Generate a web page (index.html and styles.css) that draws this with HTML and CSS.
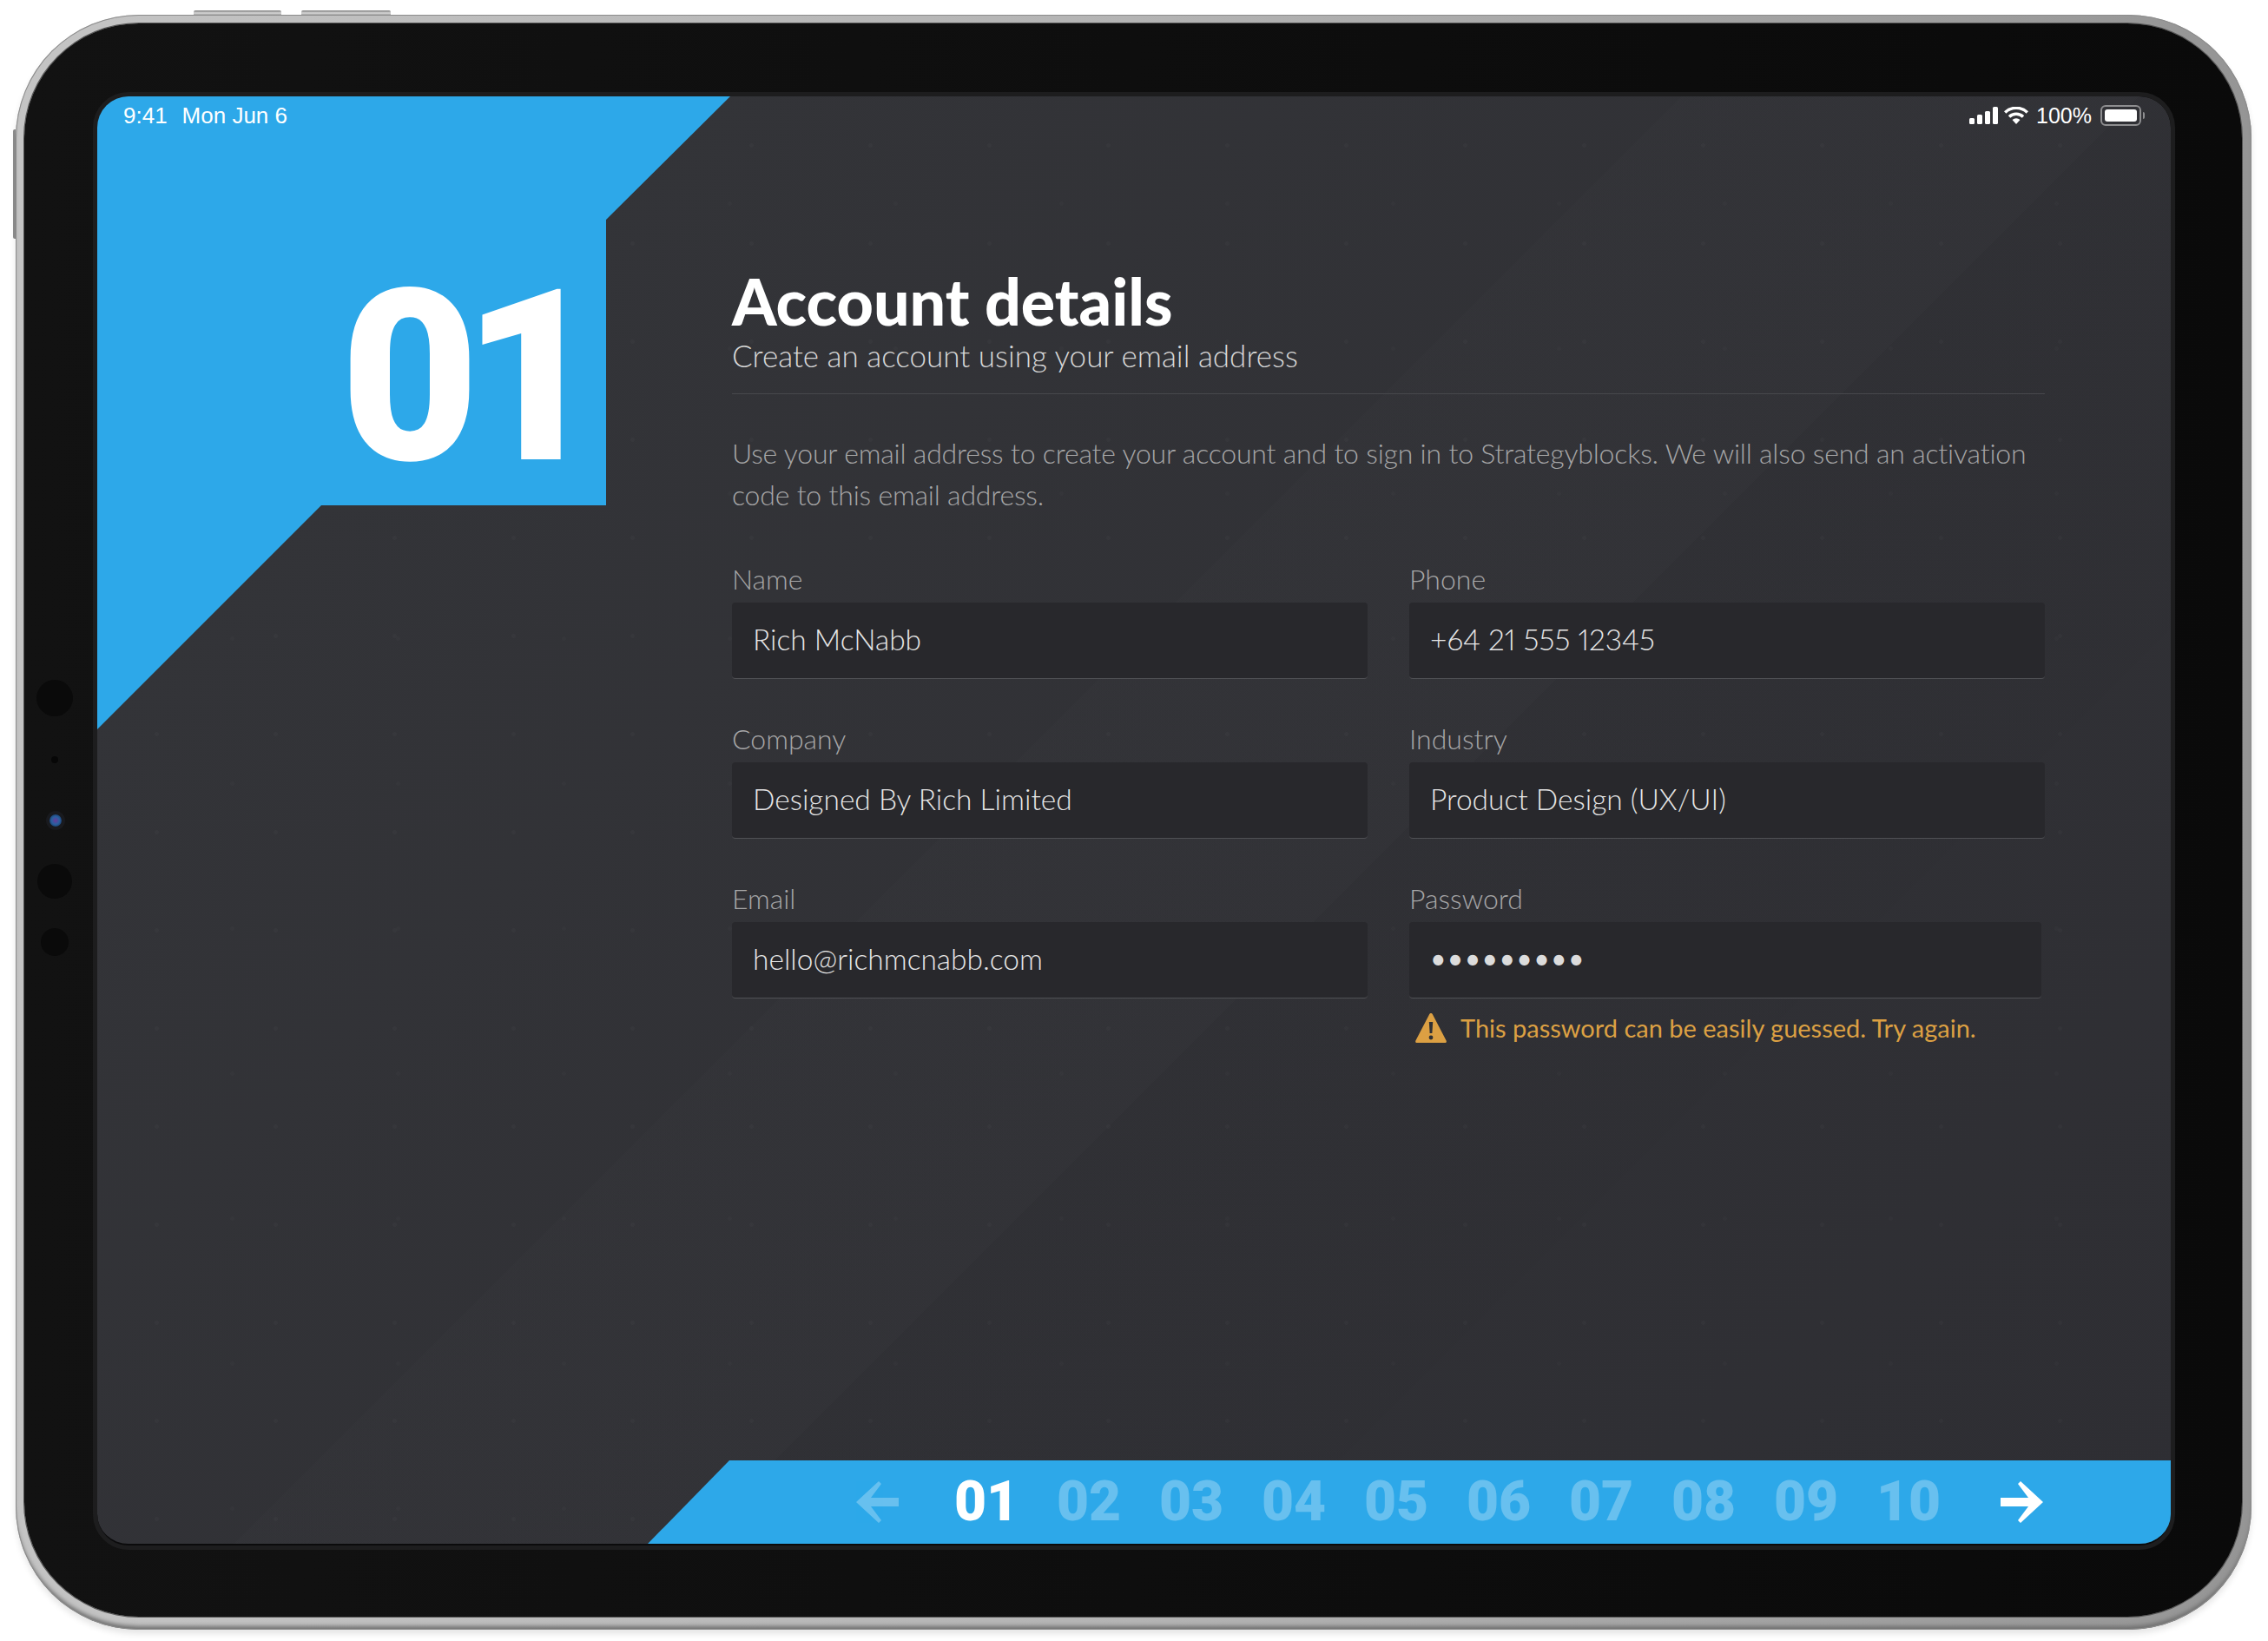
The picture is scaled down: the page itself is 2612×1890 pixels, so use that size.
FILE: index.html
```html
<!DOCTYPE html>
<html lang="en">

<head>
    <meta charset="UTF-8">
    <meta name="viewport" content="width=device-width, initial-scale=1.0">
    <title>Account details</title>
    <link rel="stylesheet" href="styles.css">
</head>

<body>
    <span class="hw-btn hw-btn-a"></span>
    <span class="hw-btn hw-btn-b"></span>
    <span class="hw-btn hw-btn-side"></span>
    <div class="device">
        <!-- camera side -->
        <span class="sensor sensor-a"></span>
        <span class="sensor sensor-b"></span>
        <span class="sensor sensor-cam"></span>
        <span class="sensor sensor-c"></span>
        <span class="sensor sensor-d"></span>

        <div class="bezel">
            <div class="screen">
                <div class="status-bar">
                    <div class="status-left"><span>9:41</span><span>Mon Jun 6</span></div>
                    <div class="status-right">
                        <svg class="ico-signal" viewBox="0 0 33 20" width="33" height="20">
                            <rect x="0" y="13" width="6" height="7" rx="1.5" fill="#fff" />
                            <rect x="9" y="9" width="6" height="11" rx="1.5" fill="#fff" />
                            <rect x="18" y="5" width="6" height="15" rx="1.5" fill="#fff" />
                            <rect x="27" y="0" width="6" height="20" rx="1.5" fill="#fff" />
                        </svg>
                        <svg class="ico-wifi" viewBox="0 0 28 20" width="28" height="20">
                            <path d="M14 20l-4.500-5a7 7 0 0 1 9 0z" fill="#fff" />
                            <path d="M6 11.500a11.500 11.500 0 0 1 16 0" fill="none" stroke="#fff" stroke-width="3.500" />
                            <path d="M1.200 6.500a18.500 18.500 0 0 1 25.600 0" fill="none" stroke="#fff" stroke-width="3.500" />
                        </svg>
                        <span class="status-pct">100%</span>
                        <span class="battery"><span class="battery-fill"></span></span>
                        <span class="battery-nub"></span>
                    </div>
                </div>

                <div class="content">
                    <aside class="corner">
                        <div class="step-big">01</div>
                    </aside>

                    <main class="form-panel">
                        <h1 class="title">Account details</h1>
                        <p class="subtitle">Create an account using your email address</p>
                        <p class="intro">Use your email address to create your account and to sign in to Strategyblocks. We will also send an activation code to this email address.</p>

                        <div class="fields">
                            <div class="field">
                                <label class="field-label">Name</label>
                                <div class="field-input">Rich McNabb</div>
                            </div>
                            <div class="field">
                                <label class="field-label">Phone</label>
                                <div class="field-input">+64 21 555 12345</div>
                            </div>
                            <div class="field">
                                <label class="field-label">Company</label>
                                <div class="field-input">Designed By Rich Limited</div>
                            </div>
                            <div class="field">
                                <label class="field-label">Industry</label>
                                <div class="field-input">Product Design (UX/UI)</div>
                            </div>
                            <div class="field">
                                <label class="field-label">Email</label>
                                <div class="field-input">hello@richmcnabb.com</div>
                            </div>
                            <div class="field">
                                <label class="field-label">Password</label>
                                <div class="field-input field-password">•••••••••</div>
                                <div class="field-warning">
                                    <svg viewBox="0 0 36 34" width="36" height="34">
                                        <path d="M18 0c1 0 1.600.6 2 1.400l15.600 30c.6 1.300 0 2.600-1.500 2.600H1.900C.4 34-.2 32.700.4 31.400L16 1.400C16.400.6 17 0 18 0z" fill="#dca043" />
                                        <path d="M15.800 10h4.400l-.8 13h-2.800z" fill="#2f3034" />
                                        <circle cx="18" cy="28" r="2.400" fill="#2f3034" />
                                    </svg>
                                    <span>This password can be easily guessed. Try again.</span>
                                </div>
                            </div>
                        </div>
                    </main>
                </div>

                <nav class="step-nav">
                    <svg class="nav-arrow nav-prev" viewBox="0 0 49 48" width="49" height="48">
                        <path d="M49 19H17L29 3 26 0 0 24l26 24 3-3-12-16h32z" fill="#fff" />
                    </svg>
                    <div class="nav-steps">
                        <span class="active">01</span>
                        <span>02</span>
                        <span>03</span>
                        <span>04</span>
                        <span>05</span>
                        <span>06</span>
                        <span>07</span>
                        <span>08</span>
                        <span>09</span>
                        <span>10</span>
                    </div>
                    <svg class="nav-arrow nav-next" viewBox="0 0 49 48" width="49" height="48">
                        <path d="M0 19h32L20 3l3-3 26 24-26 24-3-3 12-16H0z" fill="#fff" />
                    </svg>
                </nav>
            </div>
        </div>
    </div>
</body>

</html>
```

FILE: styles.css
```css
* {
    padding: 0;
    margin: 0;
    box-sizing: border-box;
}

html,
body {
    width: 2612px;
    height: 1890px;
    background: #fff;
    overflow: hidden;
}

body {
    padding: 17px 19px 13px 18px;
    position: relative;
    font-family: "Lato", "Noto Sans", sans-serif;
}

/* hardware buttons */
.hw-btn {
    position: absolute;
    background: linear-gradient(#777, #d8d8d8 50%, #8a8a8a);
}

.hw-btn-a {
    left: 223px;
    top: 12px;
    width: 101px;
    height: 6px;
    border-radius: 2px 2px 0 0;
}

.hw-btn-b {
    left: 347px;
    top: 12px;
    width: 103px;
    height: 6px;
    border-radius: 2px 2px 0 0;
}

.hw-btn-side {
    left: 15px;
    top: 149px;
    width: 3px;
    height: 126px;
    background: #8e8e8e;
    border-radius: 2px 0 0 2px;
}

.device {
    position: relative;
    height: 100%;
    padding: 10px 11px 15px 10px;
    border-radius: 142px;
    background: linear-gradient(90deg, #c4c4c4, #b4b4b4 50%, #959595);
    box-shadow:
        inset 0 0 0 1px #8c8c8c,
        inset 0 -6px 5px -2px #6e6e6e,
        0 5px 7px rgba(0, 0, 0, 0.1);
}

.bezel {
    height: 100%;
    padding: 84px 82px 82px 84px;
    border-radius: 132px;
    background: linear-gradient(90deg, #121212, #0a0a0a);
    box-shadow: 0 0 0 1px #555;
}

.sensor {
    position: absolute;
    border-radius: 50%;
    background: #0a0a0a;
}

.sensor-a {
    left: 24px;
    top: 766px;
    width: 42px;
    height: 42px;
}

.sensor-b {
    left: 41px;
    top: 854px;
    width: 8px;
    height: 8px;
    background: #070707;
}

.sensor-cam {
    left: 39px;
    top: 921px;
    width: 14px;
    height: 14px;
    background: radial-gradient(circle, #6a3a9a 0, #2a5f9f 45%, #10284a 100%);
    box-shadow: 0 0 0 4px #191a1e;
}

.sensor-c {
    left: 25px;
    top: 978px;
    width: 40px;
    height: 40px;
}

.sensor-d {
    left: 29px;
    top: 1052px;
    width: 32px;
    height: 32px;
}

.screen {
    position: relative;
    height: 100%;
    display: flex;
    flex-direction: column;
    overflow: hidden;
    border-radius: 36px;
    outline: 5px solid #1d1d1e;
    border-bottom: 2px solid #0b0b0c;
    background:
        radial-gradient(circle, rgba(255, 255, 255, 0.018) 0 2px, transparent 3px) 0 0 / 137px 113px,
        radial-gradient(circle, rgba(255, 255, 255, 0.014) 0 2px, transparent 3px) 60px 40px / 191px 167px,
        linear-gradient(135deg, transparent 45%, rgba(255, 255, 255, 0.006) 45%, rgba(255, 255, 255, 0.006) 58%, transparent 58%),
        linear-gradient(135deg, transparent 58%, rgba(0, 0, 0, 0.012) 58%, rgba(0, 0, 0, 0.012) 74%, transparent 74%),
        linear-gradient(135deg, #343539, #2e2e33);
}

/* status bar floats above the blue corner */
.status-bar {
    position: absolute;
    left: 30px;
    right: 30px;
    top: 8px;
    height: 28px;
    display: flex;
    justify-content: space-between;
    align-items: center;
    z-index: 2;
    color: #fff;
    font-family: "Liberation Sans", sans-serif;
    font-size: 26px;
}

.status-left {
    display: flex;
    gap: 17px;
}

.status-right {
    display: flex;
    align-items: center;
    font-size: 25px;
}

.ico-wifi {
    margin-left: 7px;
}

.status-pct {
    margin-left: 9px;
}

.battery {
    margin-left: 10px;
    width: 47px;
    height: 24px;
    padding: 3px;
    border: 2px solid #8e8e90;
    border-radius: 6px;
}

.battery-fill {
    display: block;
    height: 100%;
    background: #fff;
    border-radius: 3px;
}

.battery-nub {
    width: 2px;
    height: 8px;
    margin-left: 2px;
    background: #8e8e90;
    border-radius: 0 2px 2px 0;
}

.content {
    flex: 1;
    display: flex;
    min-height: 0;
}

.corner {
    width: 731px;
    flex: none;
    padding: 160px 0 0 280px;
    background: #2da8e9;
    clip-path: polygon(0 0, 729px 0, 586px 142px, 586px 471px, 258px 471px, 0 729px);
}

.step-big {
    color: #fff;
    font-family: "Roboto", sans-serif;
    font-weight: 900;
    font-size: 276px;
    line-height: 328px;
    letter-spacing: -19px;
}

.form-panel {
    flex: 1;
    padding: 196px 145px 0 0;
}

.title {
    color: #fff;
    font-weight: 900;
    font-size: 73.5px;
    line-height: 80px;
}

.subtitle {
    color: #d8d8d8;
    font-weight: 300;
    font-size: 35px;
    line-height: 44px;
    padding-bottom: 22px;
    border-bottom: 1px solid #47484c;
}

.intro {
    margin-top: 44px;
    color: #a6a6a7;
    font-weight: 300;
    font-size: 32px;
    letter-spacing: -0.2px;
    line-height: 48px;
}

.fields {
    margin-top: 52px;
    display: grid;
    grid-template-columns: 732px 732px;
    column-gap: 48px;
    grid-auto-rows: 184px;
}

.field-label {
    display: block;
    height: 48px;
    color: #a6a6a7;
    font-weight: 300;
    font-size: 32px;
    line-height: 42px;
}

.field-input {
    height: 88px;
    padding-left: 24px;
    color: #e6e6e6;
    font-weight: 300;
    font-size: 33.5px;
    font-variant-numeric: proportional-nums;
    line-height: 85px;
    background: #28282c;
    border-bottom: 1px solid #505155;
    border-radius: 4px;
}

.field-password {
    width: 728px;
    letter-spacing: 1.3px;
    font-size: 32px;
    font-weight: 400;
    line-height: 83px;
    color: #dcdcdc;
}

.field-warning {
    display: flex;
    align-items: center;
    gap: 16px;
    margin: 17px 0 0 7px;
    color: #dca043;
    font-weight: 400;
    font-size: 29px;
    line-height: 34px;
}

/* bottom step nav */
.step-nav {
    height: 96px;
    margin-left: 634px;
    flex: none;
    display: flex;
    align-items: center;
    padding-left: 240px;
    background: #2da8e9;
    clip-path: polygon(94px 0, 100% 0, 100% 100%, 0 100%);
}

.nav-prev {
    opacity: 0.28;
}

.nav-steps {
    margin-left: 42px;
    display: flex;
}

.nav-steps span {
    width: 118px;
    text-align: center;
    color: #fff;
    opacity: 0.28;
    font-family: "Roboto", sans-serif;
    font-weight: 900;
    font-size: 64px;
    line-height: 100px;
}

.nav-steps .active {
    opacity: 1;
}

.nav-next {
    margin-left: 47px;
}
```
